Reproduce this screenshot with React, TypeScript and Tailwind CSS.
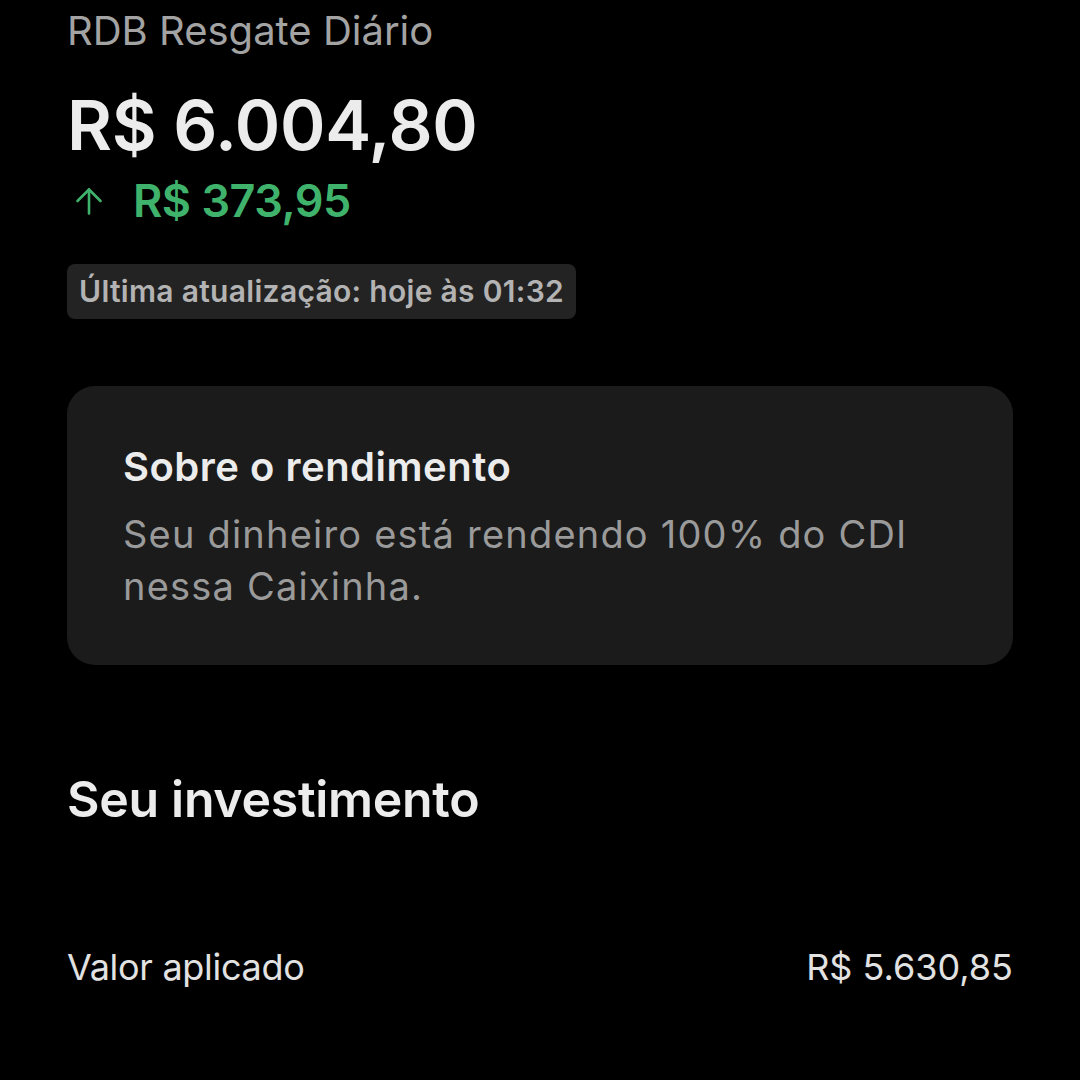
export default function App() {
  return (
    <div className="w-[1080px] h-[1080px] bg-black overflow-hidden font-['Inter',sans-serif] px-[67px] pt-[7px]">
      <p className="text-[40px] leading-[48px] text-[#a3a3a3]">RDB Resgate Diário</p>

      <p className="mt-[30px] text-[69px] leading-[80px] font-semibold text-[#ececec] tracking-[-0.3px]">R$ 6.004,80</p>

      <div className="flex items-center gap-[30px] mt-[10px] h-[52px]">
        <svg width="28" height="28" viewBox="0 0 28 28" fill="none" stroke="#3fb36c" strokeWidth="2.6" strokeLinecap="round" strokeLinejoin="round" className="ml-[8px]">
          <path d="M14 26.5V2.5" />
          <path d="M2.5 14L14 2.5 25.5 14" />
        </svg>
        <p className="text-[45px] leading-[52px] font-semibold text-[#3fb36c] tracking-[-0.5px]">R$ 373,95</p>
      </div>

      <div className="mt-[37px] inline-flex items-center h-[55px] px-[12px] rounded-[8px] bg-[#232323]">
        <span className="text-[30px] font-semibold text-[#b3b3b3] tracking-[0.3px]">Última atualização: hoje às 01:32</span>
      </div>

      <div className="mt-[67px] h-[279px] rounded-[28px] bg-[#1b1b1b] px-[56px] pt-[57px]">
        <p className="text-[40px] leading-[48px] font-semibold text-[#ececec] tracking-[0.5px]">Sobre o rendimento</p>
        <p className="mt-[17px] text-[38px] leading-[52px] text-[#9a9a9a] tracking-[1.2px]">
          Seu dinheiro está rendendo 100% do CDI
          <br />
          nessa Caixinha.
        </p>
      </div>

      <p className="mt-[104px] text-[50px] leading-[60px] font-semibold text-[#ececec] tracking-[-0.3px]">Seu investimento</p>

      <div className="mt-[116px] flex justify-between items-center">
        <span className="text-[36px] leading-[44px] text-[#e2e2e2] tracking-[-0.3px]">Valor aplicado</span>
        <span className="text-[36px] leading-[44px] text-[#e2e2e2]">R$ 5.630,85</span>
      </div>
    </div>
  );
}
